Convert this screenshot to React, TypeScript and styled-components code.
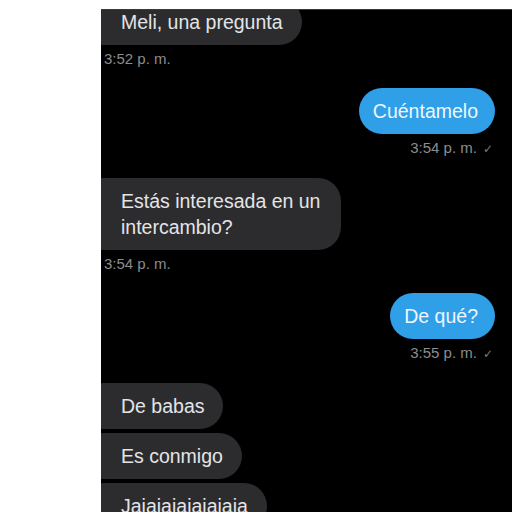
import React from "react";
import styled, { createGlobalStyle } from "styled-components";

const Global = createGlobalStyle`
  html, body { margin: 0; padding: 0; background: #ffffff; }
  body { font-family: "Liberation Sans", Arial, sans-serif; }
`;

const Page = styled.div`
  width: 512px;
  height: 512px;
  box-sizing: border-box;
  padding: 9px 0 0 101px;
  background: #ffffff;
  overflow: hidden;
`;

const Panel = styled.div`
  height: 503px;
  background: #000000;
  border-top: 1px solid #3a3a3a;
  box-sizing: border-box;
  overflow: hidden;
  padding-right: 17px;
`;

const Thread = styled.div`
  display: flex;
  flex-direction: column;
  margin-top: -11px;
`;

const Bubble = styled.div<{ $out?: boolean; $gap?: number; $max?: number }>`
  box-sizing: border-box;
  align-self: ${(p) => (p.$out ? "flex-end" : "flex-start")};
  margin-top: ${(p) => p.$gap ?? 0}px;
  margin-left: ${(p) => (p.$out ? 0 : -20)}px;
  padding: ${(p) => (p.$out ? "10px 17px 10px 14px" : "10px 19px 10px 40px")};
  max-width: ${(p) => (p.$max ? `${p.$max}px` : "none")};
  border-radius: 23px;
  background: ${(p) => (p.$out ? "#2f9fe8" : "#2c2c2f")};
  color: ${(p) => (p.$out ? "#eef7ff" : "#e4e4e6")};
  font-size: 19.5px;
  line-height: 26px;
  white-space: ${(p) => (p.$max ? "normal" : "nowrap")};
`;

const Stamp = styled.div<{ $out?: boolean }>`
  align-self: ${(p) => (p.$out ? "flex-end" : "flex-start")};
  margin-top: 5px;
  margin-left: ${(p) => (p.$out ? 0 : 3)}px;
  margin-right: ${(p) => (p.$out ? 2 : 0)}px;
  color: #8c8c8e;
  font-size: 15px;
  line-height: 18px;
  white-space: nowrap;
`;

const Check = styled.span`
  margin-left: 6px;
  font-family: "DejaVu Sans", sans-serif;
  font-size: 12px;
  color: #7d7d80;
`;

export default function App() {
  return (
    <>
      <Global />
      <Page>
        <Panel>
          <Thread>
            <Bubble>Meli, una pregunta</Bubble>
            <Stamp>3:52 p. m.</Stamp>
            <Bubble $out $gap={20}>Cuéntamelo</Bubble>
            <Stamp $out>
              3:54 p. m.<Check>✓</Check>
            </Stamp>
            <Bubble $gap={20} $max={260}>Estás interesada en un intercambio?</Bubble>
            <Stamp>3:54 p. m.</Stamp>
            <Bubble $out $gap={20}>De qué?</Bubble>
            <Stamp $out>
              3:55 p. m.<Check>✓</Check>
            </Stamp>
            <Bubble $gap={20}>De babas</Bubble>
            <Bubble $gap={4}>Es conmigo</Bubble>
            <Bubble $gap={4}>Jajajajajajajaja</Bubble>
          </Thread>
        </Panel>
      </Page>
    </>
  );
}
